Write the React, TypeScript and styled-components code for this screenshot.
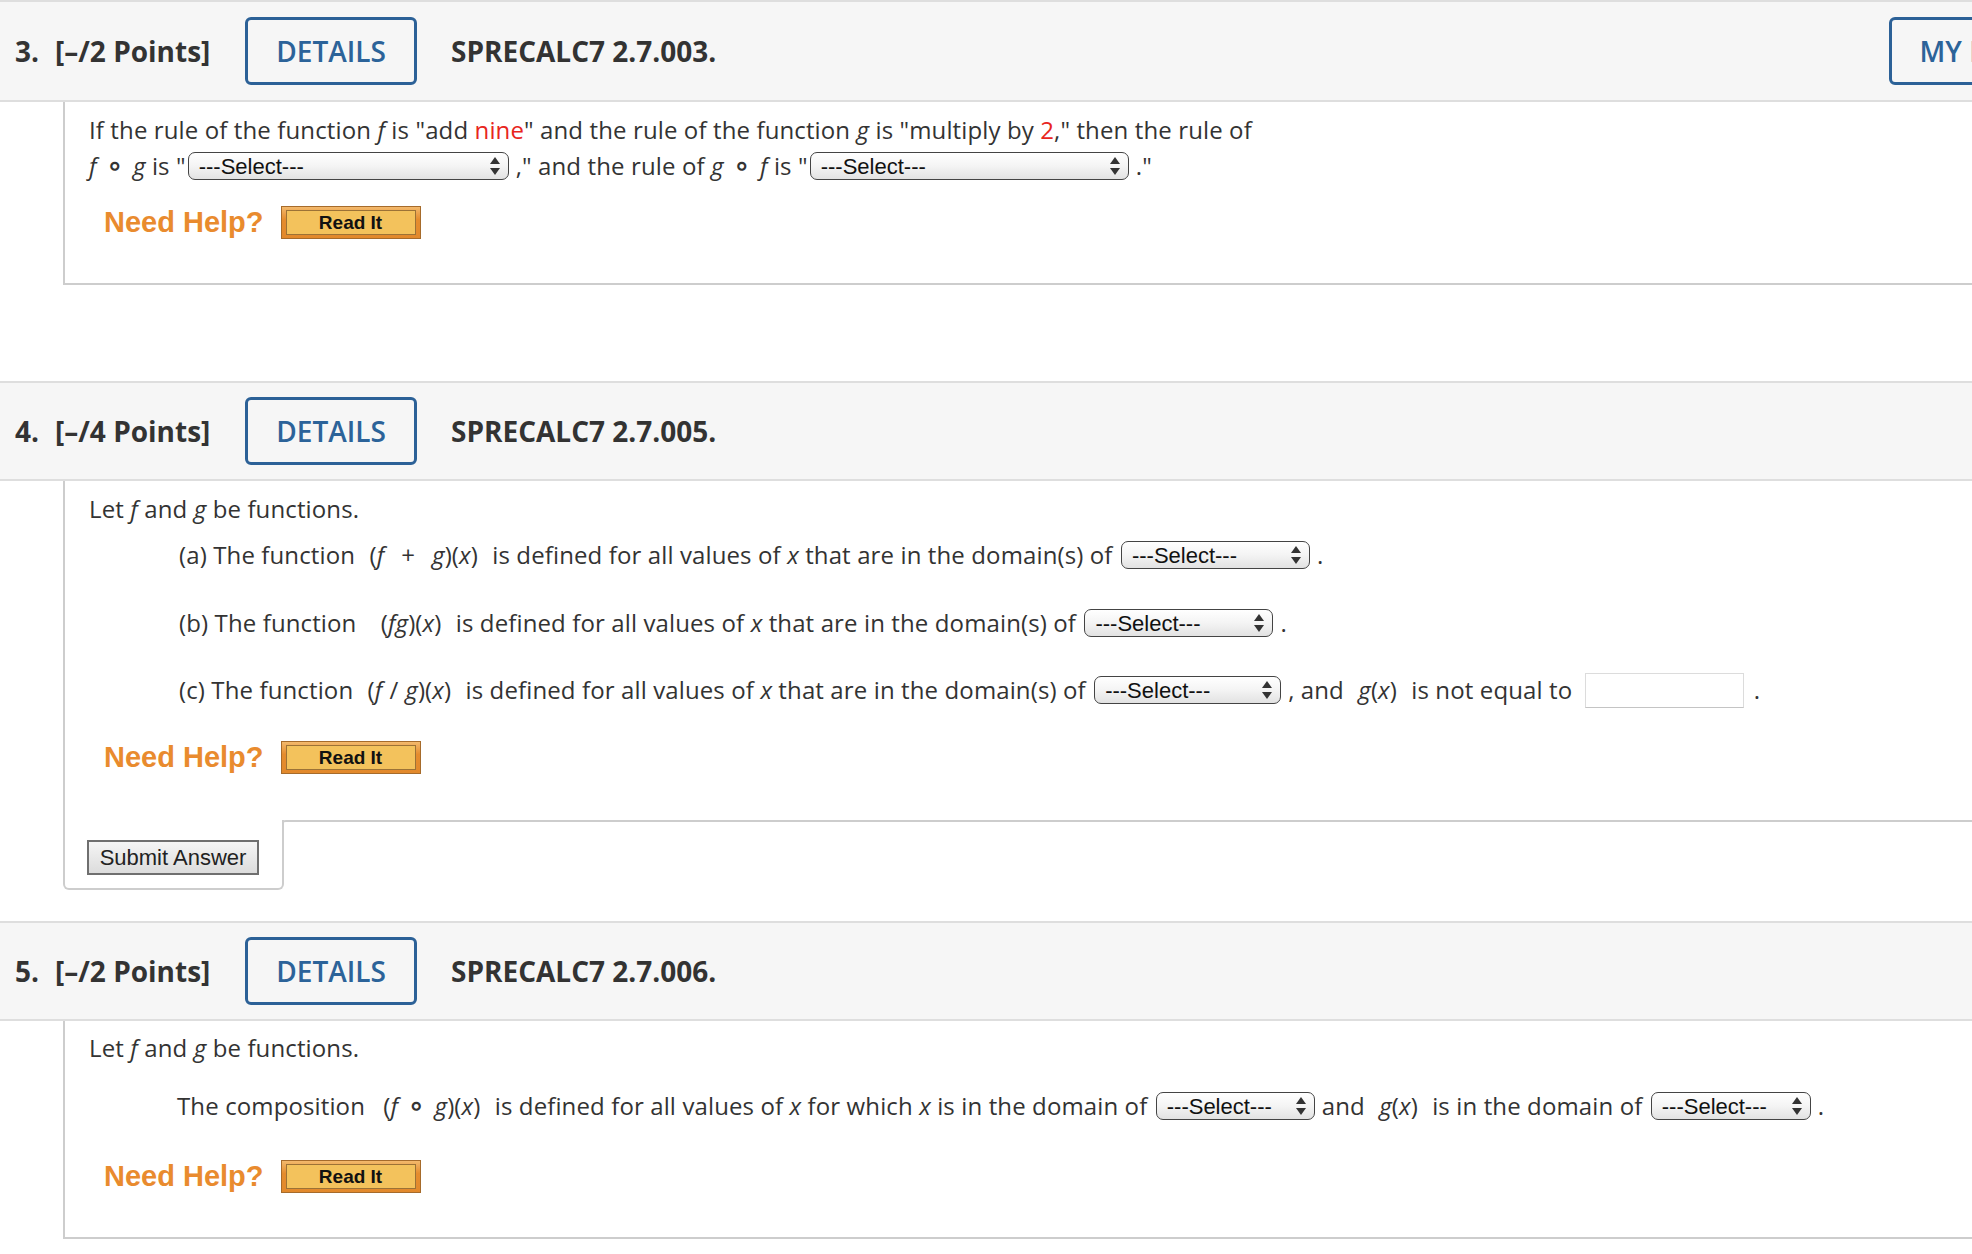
import styled, { createGlobalStyle } from "styled-components";

const GlobalStyle = createGlobalStyle`
  html, body {
    margin: 0;
    padding: 0;
    background: #fff;
    overflow: hidden;
  }
  body {
    font-family: "Open Sans", "Liberation Sans", sans-serif;
    color: #333;
  }
`;

const Page = styled.div`
  width: 2112px;
`;

const Question = styled.section<{ $gap?: number }>`
  margin-bottom: ${(p) => p.$gap ?? 0}px;
`;

const Header = styled.header<{ $h?: number }>`
  display: flex;
  align-items: center;
  height: ${(p) => p.$h ?? 96}px;
  padding: 0 21px 0 15px;
  background: #f6f6f6;
  border-top: 2px solid #dedede;
  border-bottom: 2px solid #dedede;
  font-size: 28px;
  font-weight: 700;
  color: #333;
`;

const QNum = styled.span`
  width: 40px;
`;

const Points = styled.span`
  margin-right: 35px;
`;

const OutlineButton = styled.button<{ $push?: boolean }>`
  box-sizing: border-box;
  height: 68px;
  padding: 0 28px;
  margin-left: ${(p) => (p.$push ? "auto" : "0")};
  border: 3px solid #2c6197;
  border-radius: 6px;
  background: transparent;
  font-family: "Open Sans", sans-serif;
  font-size: 28px;
  font-weight: 600;
  color: #2c6399;
  white-space: nowrap;
`;

const Title = styled.span`
  margin-left: 34px;
`;

const Body = styled.div<{ $bottom?: boolean; $pt: number; $pb: number }>`
  margin-left: 63px;
  border-left: 2px solid #cdcdcd;
  border-bottom: ${(p) => (p.$bottom ? "2px solid #cdcdcd" : "none")};
  padding: ${(p) => p.$pt}px 0 ${(p) => p.$pb}px 24px;
  font-size: 24px;
  line-height: 36px;
  letter-spacing: 0.12px;
  color: #333;
`;

const Line = styled.div<{ $indent?: number; $mt?: number }>`
  height: 36px;
  margin-top: ${(p) => p.$mt ?? 0}px;
  padding-left: ${(p) => p.$indent ?? 0}px;
  white-space: nowrap;
`;

const V = styled.i`
  font-style: italic;
`;

const Red = styled.span`
  color: #e8251d;
`;

const Compose = styled.span`
  margin: 0 3px;
  font-family: "DejaVu Sans", sans-serif;
  font-weight: 700;
  font-size: 28px;
  line-height: 1;
`;

const MathExpr = styled.span<{ $lead?: number }>`
  margin: 0 8px 0 ${(p) => 8 + (p.$lead ?? 0)}px;
`;

const Op = styled.span<{ $space: number }>`
  margin: 0 ${(p) => p.$space}px;
`;

const SelectWrap = styled.span<{ $w: number }>`
  position: relative;
  display: inline-block;
  vertical-align: middle;
  width: ${(p) => p.$w}px;
  height: 28px;
  margin: 0 7px 5px 2px;
`;

const SelectEl = styled.select`
  appearance: none;
  -webkit-appearance: none;
  display: block;
  box-sizing: border-box;
  width: 100%;
  height: 100%;
  padding: 0 26px 0 10px;
  border: 1.5px solid #444;
  border-radius: 7px;
  background: linear-gradient(#ffffff, #f4f4f4 50%, #e2e2e2);
  font-family: "Liberation Sans", Arial, sans-serif;
  font-size: 22px;
  letter-spacing: 0;
  color: #111;
  outline: none;
`;

const Arrows = styled.svg`
  position: absolute;
  right: 9px;
  top: 50%;
  transform: translateY(-50%);
  pointer-events: none;
`;

const TextInput = styled.input`
  box-sizing: border-box;
  width: 159px;
  height: 35px;
  margin: 0 10px 5px 6px;
  vertical-align: middle;
  border: 1px solid #dcdcdc;
  border-bottom-color: #c4c4c4;
  background: #fff;
`;

const HelpRow = styled.div<{ $mt: number }>`
  display: flex;
  align-items: center;
  gap: 17px;
  height: 33px;
  margin-top: ${(p) => p.$mt}px;
  padding-left: 15px;
  letter-spacing: 0;
`;

const NeedHelp = styled.span`
  font-family: "Liberation Sans", Arial, sans-serif;
  font-size: 29px;
  font-weight: 700;
  line-height: 1;
  color: #e98b2e;
`;

const ReadItButton = styled.button`
  box-sizing: border-box;
  width: 140px;
  height: 33px;
  padding: 3px 4px;
  border: 1px solid #a66b2b;
  background: linear-gradient(#f3b96c, #e58c2e 40%, #e2892c);
`;

const ReadItFace = styled.span`
  box-sizing: border-box;
  display: flex;
  align-items: center;
  justify-content: center;
  height: 100%;
  border: 1px solid #9c7236;
  background: #f3c25c;
  font-family: "Liberation Sans", Arial, sans-serif;
  font-size: 19px;
  font-weight: 700;
  color: #111;
`;

const SubmitRow = styled.div`
  display: flex;
  margin: 0 0 31px 63px;
`;

const SubmitBox = styled.div`
  box-sizing: border-box;
  width: 221px;
  height: 70px;
  padding: 20px 0 0 22px;
  border: 2px solid #cdcdcd;
  border-top: none;
  border-radius: 0 0 6px 6px;
`;

const SubmitFiller = styled.div`
  flex: 1;
  margin-left: -2px;
  border-top: 2px solid #cdcdcd;
  border-top-left-radius: 4px;
`;

const SubmitButton = styled.button`
  box-sizing: border-box;
  width: 172px;
  height: 35px;
  border: 2px solid #6f6f6f;
  background: linear-gradient(#f5f5f5, #dcdcdc);
  font-family: "Liberation Sans", Arial, sans-serif;
  font-size: 22px;
  color: #222;
`;

const Select = ({ w }: { w: number }) => (
  <SelectWrap $w={w}>
    <SelectEl defaultValue="">
      <option value="">---Select---</option>
    </SelectEl>
    <Arrows width="10" height="18" viewBox="0 0 10 18">
      <polygon points="5,0 10,7 0,7" fill="#333" />
      <polygon points="0,11 10,11 5,18" fill="#333" />
    </Arrows>
  </SelectWrap>
);

const HelpBlock = ({ mt }: { mt: number }) => (
  <HelpRow $mt={mt}>
    <NeedHelp>Need Help?</NeedHelp>
    <ReadItButton>
      <ReadItFace>Read It</ReadItFace>
    </ReadItButton>
  </HelpRow>
);

const QuestionHeader = ({
  num,
  points,
  code,
  notes,
  h,
}: {
  num: number;
  points: number;
  code: string;
  notes?: boolean;
  h?: number;
}) => (
  <Header $h={h}>
    <QNum>{num}.</QNum>
    <Points>[–/{points} Points]</Points>
    <OutlineButton>DETAILS</OutlineButton>
    <Title>{code}</Title>
    {notes && <OutlineButton $push>MY NOTES</OutlineButton>}
  </Header>
);

const App = () => {
  return (
    <Page>
      <GlobalStyle />

      <Question $gap={96}>
        <QuestionHeader num={3} points={2} code="SPRECALC7 2.7.003." notes h={98} />
        <Body $bottom $pt={10} $pb={44}>
          <Line>
            If the rule of the function <V>f</V> is "add <Red>nine</Red>" and the rule of the
            function <V>g</V> is "multiply by <Red>2</Red>," then the rule of
          </Line>
          <Line>
            <V>f</V> <Compose>∘</Compose> <V>g</V> is "<Select w={321} />," and the rule of{" "}
            <V>g</V> <Compose>∘</Compose> <V>f</V> is "<Select w={319} />."
          </Line>
          <HelpBlock mt={22} />
        </Body>
      </Question>

      <Question>
        <QuestionHeader num={4} points={4} code="SPRECALC7 2.7.005." />
        <Body $pt={10} $pb={46}>
          <Line>
            Let <V>f</V> and <V>g</V> be functions.
          </Line>
          <Line $indent={90} $mt={10}>
            (a) The function{" "}
            <MathExpr>
              (<V>f</V>
              <Op $space={17}>+</Op>
              <V>g</V>)(<V>x</V>)
            </MathExpr>{" "}
            is defined for all values of <V>x</V> that are in the domain(s) of <Select w={189} />.
          </Line>
          <Line $indent={90} $mt={32}>
            (b) The function{" "}
            <MathExpr $lead={10}>
              (<V>fg</V>)(<V>x</V>)
            </MathExpr>{" "}
            is defined for all values of <V>x</V> that are in the domain(s) of <Select w={189} />.
          </Line>
          <Line $indent={90} $mt={31}>
            (c) The function{" "}
            <MathExpr>
              (<V>f</V>
              <Op $space={7}>/</Op>
              <V>g</V>)(<V>x</V>)
            </MathExpr>{" "}
            is defined for all values of <V>x</V> that are in the domain(s) of <Select w={187} />, and{" "}
            <MathExpr>
              <V>g</V>(<V>x</V>)
            </MathExpr>{" "}
            is not equal to <TextInput type="text" />.
          </Line>
          <HelpBlock mt={33} />
        </Body>
        <SubmitRow>
          <SubmitBox>
            <SubmitButton>Submit Answer</SubmitButton>
          </SubmitBox>
          <SubmitFiller />
        </SubmitRow>
      </Question>

      <Question>
        <QuestionHeader num={5} points={2} code="SPRECALC7 2.7.006." />
        <Body $bottom $pt={9} $pb={44}>
          <Line>
            Let <V>f</V> and <V>g</V> be functions.
          </Line>
          <Line $indent={88} $mt={22}>
            The composition{" "}
            <MathExpr $lead={4}>
              (<V>f</V> <Compose>∘</Compose> <V>g</V>)(<V>x</V>)
            </MathExpr>{" "}
            is defined for all values of <V>x</V> for which <V>x</V> is in the domain of{" "}
            <Select w={159} />
            and{" "}
            <MathExpr>
              <V>g</V>(<V>x</V>)
            </MathExpr>{" "}
            is in the domain of <Select w={160} />.
          </Line>
          <HelpBlock mt={36} />
        </Body>
      </Question>
    </Page>
  );
};

export default App;
